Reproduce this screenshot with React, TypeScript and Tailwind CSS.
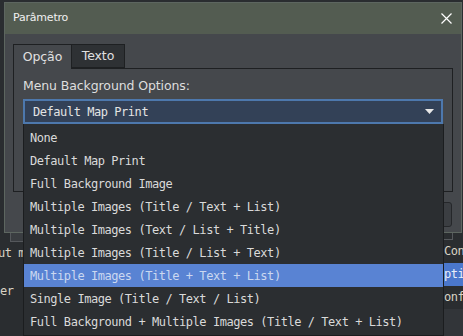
import React from "react";

const items = [
  "None",
  "Default Map Print",
  "Full Background Image",
  "Multiple Images (Title / Text + List)",
  "Multiple Images (Text / List + Title)",
  "Multiple Images (Title / List + Text)",
  "Multiple Images (Title + Text + List)",
  "Single Image (Title / Text / List)",
  "Full Background + Multiple Images (Title / Text + List)",
];

const mono = { fontFamily: '"DejaVu Sans Mono", "Liberation Mono", monospace' };
const sans = { fontFamily: '"DejaVu Sans", "Liberation Sans", sans-serif' };

export default function App() {
  return (
    <div className="relative w-[463px] h-[336px] overflow-hidden bg-[#2a2d30]" style={sans}>
      {/* background window (behind the dialog) */}
      <div className="absolute inset-0 flex flex-col text-[12px] tracking-[-0.45px] text-[#d8d2c4]" style={mono}>
        <div className="h-[232px]" />
        <div className="flex h-[104px]">
          <div className="w-[23px] flex flex-col">
            <div className="h-[10px] ml-[10px] border-l border-b border-[#55585c] bg-[#3a3d41]" />
            <div className="h-[23px] leading-[23px] -ml-[2px] whitespace-nowrap">ut m</div>
            <div className="h-[15px]" />
            <div className="h-[23px] leading-[23px] whitespace-nowrap">er</div>
          </div>
          <div className="flex-1" />
          <div className="w-[19px] flex flex-col overflow-hidden">
            <div className="h-[8px] mr-[10px] border-b border-r border-[#55585c]" />
            <div className="h-[23px] leading-[23px] whitespace-nowrap">Conf</div>
            <div className="h-[23px] leading-[23px] whitespace-nowrap bg-[#4a77cc] text-[#e8eef8]">ptic</div>
            <div className="h-[23px] leading-[23px] whitespace-nowrap">onfi</div>
            <div className="flex-1 bg-[#323539]" />
          </div>
        </div>
      </div>

      {/* dialog window */}
      <div className="absolute left-[4px] top-[2px] w-[458px] h-[231px] flex flex-col border border-[#5d6660] bg-[#45484c]">
        <div className="h-[31px] shrink-0 flex items-center justify-between pl-[8px] pr-[9px] bg-[#535c51] text-[#f0f0f0] text-[11px] tracking-[-0.2px]">
          <span>Parâmetro</span>
          <svg width="11" height="11" viewBox="0 0 11 11">
            <path d="M0.5 0.5 L10.5 10.5 M10.5 0.5 L0.5 10.5" stroke="#ffffff" strokeWidth="1.2" />
          </svg>
        </div>
        <div className="flex-1 flex flex-col px-[8px] pt-[9px]">
          <div className="flex h-[25px] items-end">
            <div className="h-[25px] w-[59px] flex items-center justify-center border border-b-0 border-[#1e2022] bg-[#45484c] text-[#e0e0e0] text-[12.5px] tracking-[-0.1px] relative -mb-px z-10">
              Opção
            </div>
            <div className="h-[24px] w-[53px] flex items-center justify-center border border-l-0 border-[#1e2022] bg-[#2e3134] text-[#e0e0e0] text-[12.5px] tracking-[-0.1px]">
              Texto
            </div>
          </div>
          <div className="h-[124px] w-[440px] border border-[#1e2022] bg-[#45484c] pl-[9px] pt-[9px]">
            <div className="text-[12.5px] tracking-[-0.1px] text-[#dedede] leading-[16px]">Menu Background Options:</div>
            <div className="mt-[5px] h-[25px] w-[420px] flex items-center justify-between border-2 border-[#4d78ad] bg-[#334157] pl-[8px] pr-[7px]">
              <span className="text-[12px] tracking-[-0.45px] text-[#e4e4e4]" style={mono}>Default Map Print</span>
              <svg width="9" height="5" viewBox="0 0 9 5">
                <path d="M0 0 L9 0 L4.5 5 Z" fill="#e8e8e8" />
              </svg>
            </div>
          </div>
          <div className="flex justify-end pr-[1px] pt-[10px]">
            <div className="h-[25px] w-[80px] rounded-[3px] border border-[#25272a] bg-[#3b3e42]" />
          </div>
        </div>
      </div>

      {/* dropdown popup */}
      <div className="absolute left-[23px] top-[124px] w-[421px] bottom-0 flex flex-col pt-[2px] border border-t-0 border-[#1b1d1f] bg-[#2b2e31] text-[12px] tracking-[-0.45px] text-[#dadada]" style={mono}>
        {items.map((t, i) => (
          <div
            key={t}
            className={
              i === 6
                ? "h-[23px] shrink-0 flex items-center pl-[6px] whitespace-nowrap bg-[#5983d3] text-[#cbd8f0]"
                : "h-[23px] shrink-0 flex items-center pl-[6px] whitespace-nowrap"
            }
          >
            {t}
          </div>
        ))}
      </div>
    </div>
  );
}
